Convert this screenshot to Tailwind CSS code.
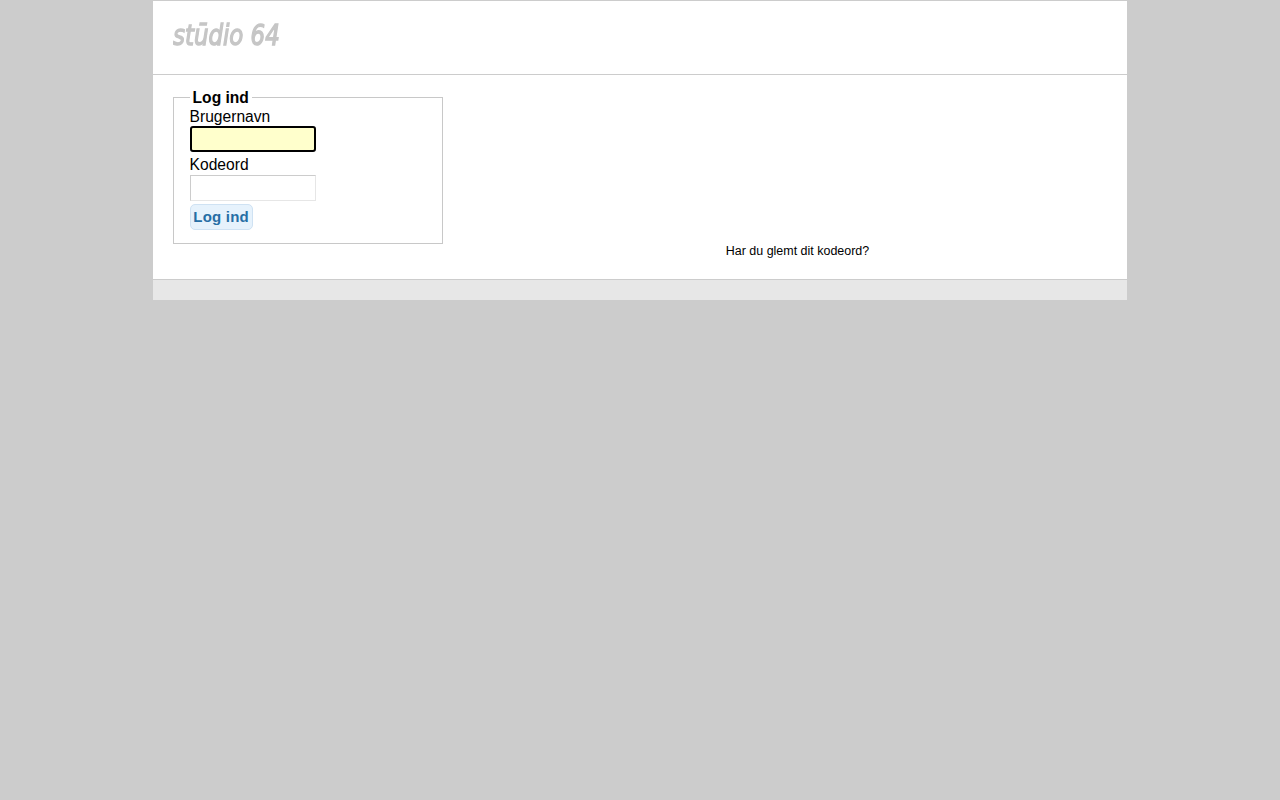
<!DOCTYPE html>
<html lang="da">
<head>
    <meta charset="UTF-8">
    <meta name="viewport" content="width=device-width, initial-scale=1.0">
    <title>Log ind - Studio 64</title>
    <script src="https://cdn.jsdelivr.net/npm/@tailwindcss/browser@4"></script>
</head>
<body class="bg-[#cccccc] min-h-screen font-['Liberation_Sans',Arial,sans-serif] text-black">
    <div class="w-[974px] ml-[153px] bg-white">
        <!-- Header -->
        <div class="h-[75px] border-t border-b border-[#cccccc] pl-5 pt-[14px]">
            <svg class="block blur-[0.3px]" width="130" height="40" viewBox="0 0 130 40">
                <text transform="translate(0 30) scale(0.79 1)" font-family="DejaVu Sans" font-style="italic" font-size="29" stroke-width="1.4" class="fill-[#c6c6c6] stroke-[#c6c6c6]">stūdio 64</text>
            </svg>
        </div>

        <!-- Login -->
        <div class="h-[204px] flex px-5 pt-[12px]">
            <form class="w-[270px]">
                <fieldset class="border border-[#c8c8c8] h-[157px] px-[15.6px] pb-3 text-[15.6px]">
                    <legend class="px-[3px] pt-[2px] font-bold leading-[18px]">Log ind</legend>
                    <label for="username" class="block leading-[18px] mt-[1px]">Brugernavn</label>
                    <input id="username" type="text" class="block w-[126px] h-[26px] bg-[#ffffcc] border-2 border-black rounded-[3px] outline-none">
                    <label for="password" class="block leading-[18px] mt-[4px]">Kodeord</label>
                    <input id="password" type="password" class="block w-[126px] h-[26px] mt-[1px] bg-white border border-t-[#cccccc] border-l-[#cccccc] border-r-[#e6e6e6] border-b-[#e6e6e6] outline-none">
                    <button type="button" class="block w-[63px] h-[26px] mt-[3px] bg-[#e6f2fc] border border-[#cfe2f3] rounded-[5px] text-[#266ea5] font-bold text-[15px] tracking-[0.2px] whitespace-nowrap">Log ind</button>
                </fieldset>
            </form>
            <div class="flex-1 pl-[45px] pt-[151px] text-center">
                <a href="#" class="text-[12.48px] leading-[18px] text-black">Har du glemt dit kodeord?</a>
            </div>
        </div>

        <!-- Footer -->
        <div class="h-[21px] bg-[#e7e7e7] border-t border-[#cccccc]"></div>
    </div>
</body>
</html>
